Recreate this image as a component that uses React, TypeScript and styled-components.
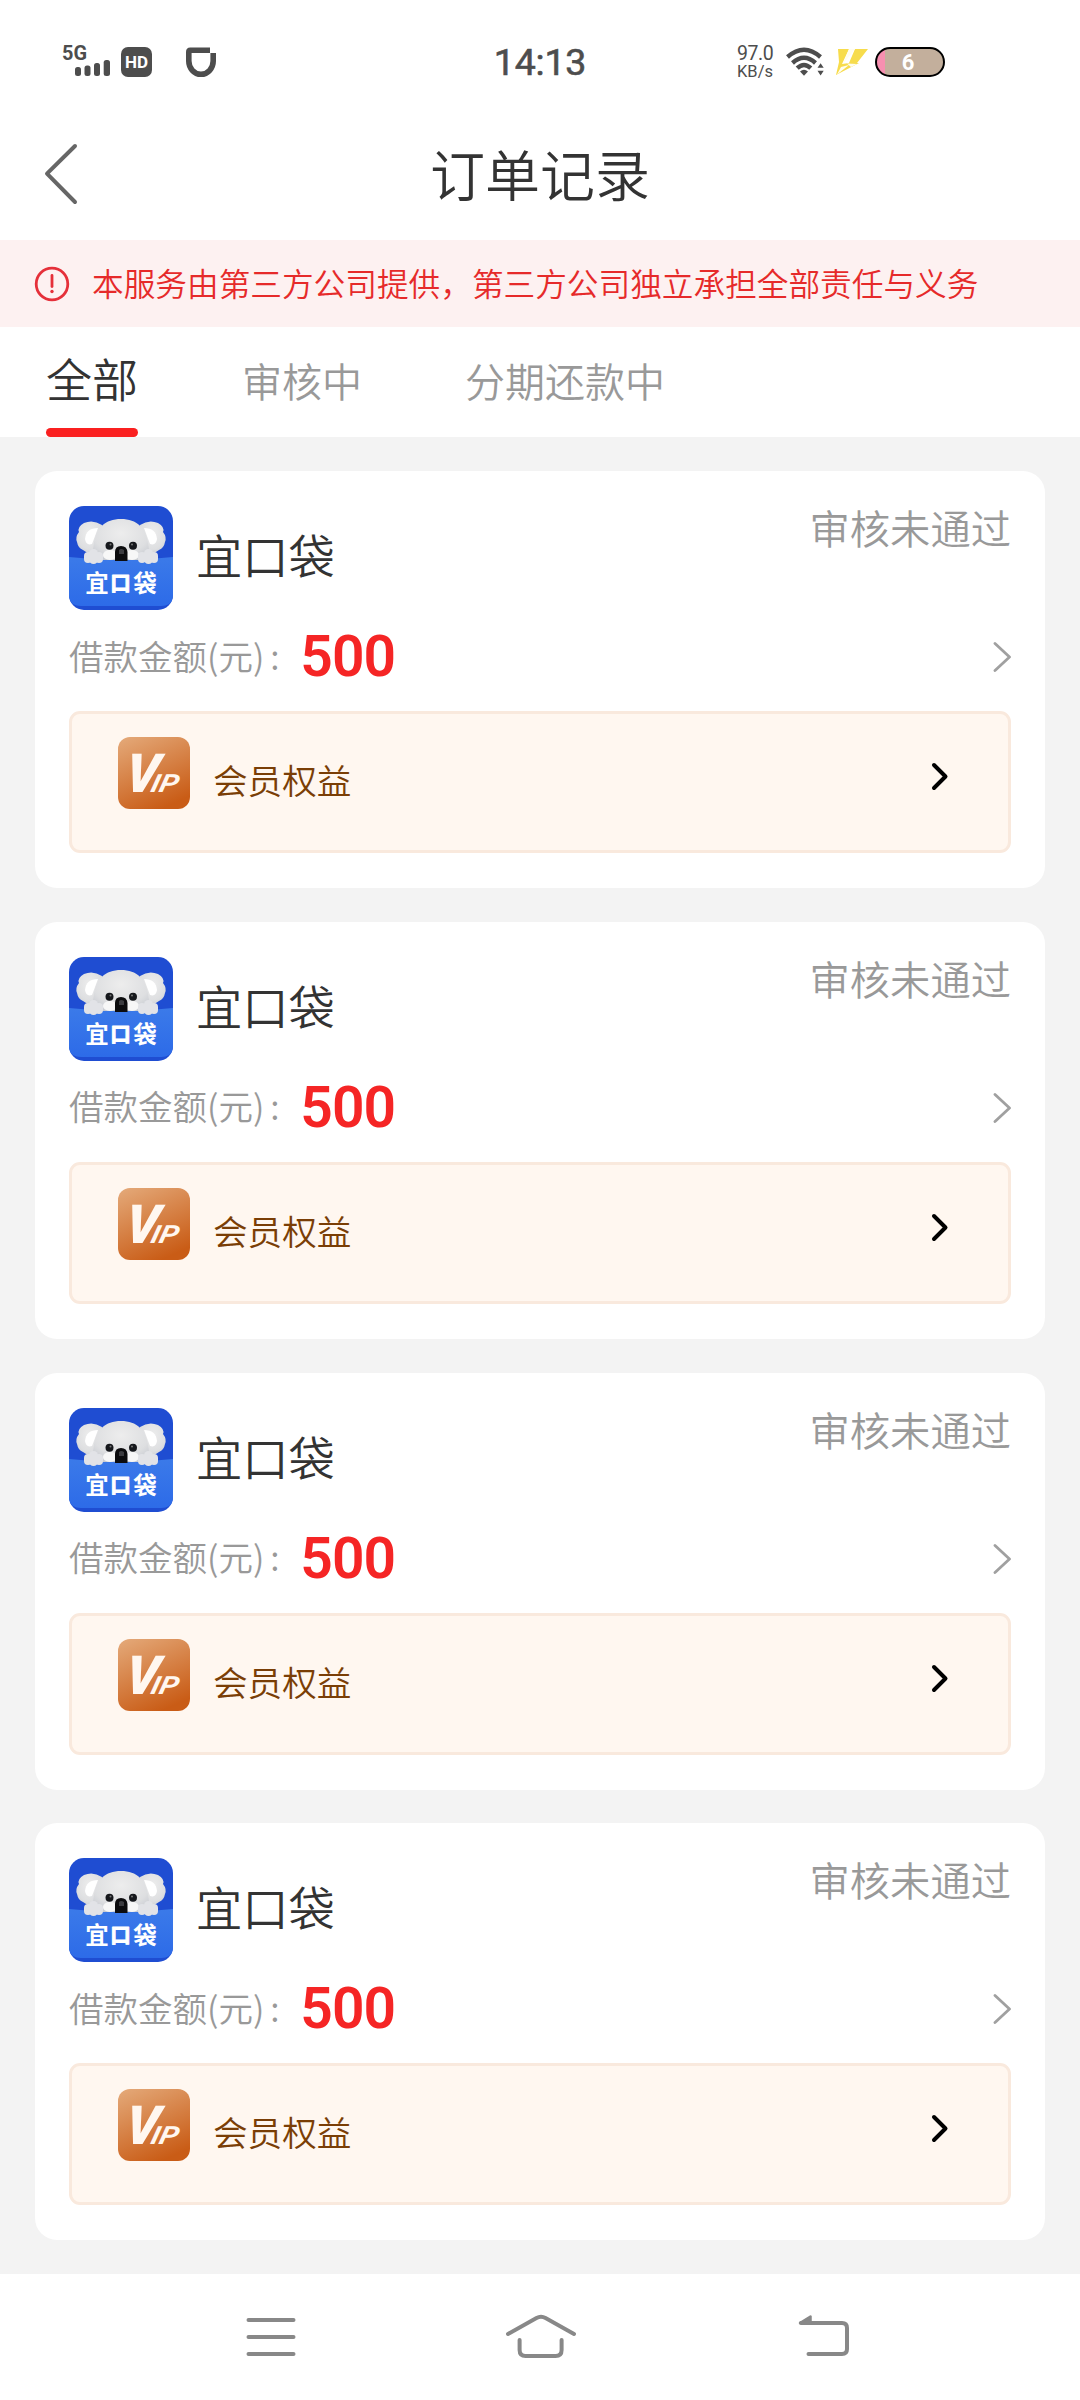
import React from "react";
import styled, { createGlobalStyle } from "styled-components";

interface Order {
  id: number;
  product: string;
  status: string;
  amount: number;
}

interface TabItem {
  label: string;
  isActive: boolean;
}

const orders: Order[] = [
  { id: 1, product: "宜口袋", status: "审核未通过", amount: 500 },
  { id: 2, product: "宜口袋", status: "审核未通过", amount: 500 },
  { id: 3, product: "宜口袋", status: "审核未通过", amount: 500 },
  { id: 4, product: "宜口袋", status: "审核未通过", amount: 500 },
];

const tabs: TabItem[] = [
  { label: "全部", isActive: true },
  { label: "审核中", isActive: false },
  { label: "分期还款中", isActive: false },
];

const SignalIcon = () => (
  <svg width="54" height="44" viewBox="0 -5 54 44">
    <text x="0" y="15" fontFamily="Roboto" fontWeight="700" fontSize="20.5" textLength="25" lengthAdjust="spacingAndGlyphs" fill="#4d4d4d">
      5G
    </text>
    <g fill="#4d4d4d">
      <rect x="13" y="22" width="6" height="9" rx="2.5" />
      <rect x="22.5" y="20.5" width="6" height="10.5" rx="2.5" />
      <rect x="32" y="18" width="6" height="13" rx="2.5" />
      <rect x="41.7" y="15" width="6.3" height="16" rx="2.5" />
    </g>
  </svg>
);

const ShieldIcon = () => (
  <svg width="32" height="32" viewBox="0 0 32 32" fill="none" stroke="#4d4d4d" strokeWidth="5.6">
    <path d="M25 4.3H5.2Q3.8 4.3 3.8 6V15C3.8 22 9 28.3 16 28.3S28.2 22 28.2 15V7" />
  </svg>
);

const WifiIcon = () => (
  <svg width="40" height="30" viewBox="0 0 40 30">
    <g fill="none" stroke="#4d4d4d" strokeWidth="4.4">
      <path d="M1.5 10Q18 -4.5 34.5 10" />
      <path d="M6.5 16Q18 5.6 29.5 16" />
      <path d="M11.2 21.2Q18 14.7 24.8 21.2" />
    </g>
    <path d="M14 24.4Q18 21.2 22 24.4L18 28.7Z" fill="#4d4d4d" />
    <path d="M31.5 20.8L34.6 16.2L37.7 20.8ZM31.5 23.8H37.7L34.6 28.4Z" fill="#4d4d4d" />
  </svg>
);

const BoltIcon = () => (
  <svg width="34" height="28" viewBox="0 0 34 28" fill="#f7dc4c">
    <path d="M3 1H14L7 16L14 15L20 1H33L22 15H24L1 27L4 14Z" />
    <path d="M14 1H20L8 16ZM6 19L14 17L2 26.5ZM12 15.5L22 16L16 19Z" fill="#fffdf0" />
  </svg>
);

const BackIcon = () => (
  <svg width="36" height="64" viewBox="0 0 36 64" fill="none" stroke="#666" strokeWidth="4" strokeLinecap="round" strokeLinejoin="round">
    <path d="M32 4L4 31.7L32 60" />
  </svg>
);

const AlertIcon = () => (
  <svg width="36" height="36" viewBox="0 0 36 36" fill="none" stroke="#e5303a" strokeWidth="2.8">
    <circle cx="18" cy="18" r="15.8" />
    <path d="M18 9.5V20.5" strokeWidth="2.8" strokeLinecap="round" />
    <circle cx="18" cy="25.5" r="1.7" fill="#e5303a" stroke="none" />
  </svg>
);

const RowChevron = () => (
  <svg width="18" height="30" viewBox="0 0 18 30" fill="none" stroke="#a0a0a0" strokeWidth="2.8" strokeLinecap="round" strokeLinejoin="round">
    <path d="M2 1.5L16.5 15L2 28.5" />
  </svg>
);

const BenefitChevron = () => (
  <svg width="18" height="30" viewBox="0 0 18 30" fill="none" stroke="#000" strokeWidth="4" strokeLinecap="round" strokeLinejoin="round">
    <path d="M3 3L14.5 14.5L3 26" />
  </svg>
);

const ProductLogo = ({ id }: { id: number }) => (
  <svg width="104" height="104" viewBox="0 0 104 104">
    <defs>
      <linearGradient id={`pocket${id}`} x1="0" y1="0" x2="0" y2="1">
        <stop offset="0" stopColor="#3b7ae9" />
        <stop offset="1" stopColor="#2d6be8" />
      </linearGradient>
      <radialGradient id={`fur${id}`} cx="0.5" cy="0.35" r="0.7">
        <stop offset="0" stopColor="#ededed" />
        <stop offset="0.7" stopColor="#dedfe1" />
        <stop offset="1" stopColor="#c9ccd2" />
      </radialGradient>
      <clipPath id={`frame${id}`}>
        <rect width="104" height="104" rx="15" />
      </clipPath>
    </defs>
    <g clipPath={`url(#frame${id})`}>
      <rect width="104" height="104" fill="#1f4dd2" />
      <path d="M0 51Q52 57 104 51V92Q102 100 92 100H12Q2 100 0 92Z" fill={`url(#pocket${id})`} />
      <g fill={`url(#fur${id})`}>
        <path d="M33 19Q24 13 15 17Q8 21 10 26Q6 31 8 36Q9 42 14 44Q22 50 32 48Z" />
        <path d="M71 19Q80 13 89 17Q96 21 94 26Q98 31 96 36Q95 42 90 44Q82 50 72 48Z" />
      </g>
      <path d="M29 22Q17 22 16 33Q17 40 23 38Z" fill="#fff" />
      <path d="M75 22Q87 22 88 33Q87 40 81 38Z" fill="#fff" />
      <path d="M29 54Q22 49 25 37C27 22 36 13 52 13S77 22 79 37Q82 49 75 54Z" fill={`url(#fur${id})`} />
      <ellipse cx="41" cy="49" rx="7" ry="5" fill="#f7f7f7" />
      <ellipse cx="63" cy="49" rx="7" ry="5" fill="#f7f7f7" />
      <circle cx="40.5" cy="39.7" r="4" fill="#16181c" />
      <circle cx="64" cy="39.7" r="4" fill="#16181c" />
      <circle cx="41.5" cy="38.6" r="1" fill="#777" />
      <circle cx="63" cy="38.6" r="1" fill="#777" />
      <path d="M46 55V46Q46 40 52 40T58.5 46V55Z" fill="#0c0c0e" />
      <path d="M50 44Q52 42 55 44V48H50Z" fill="#3c3c40" />
      <g fill="#e2e3e7">
        <rect x="15" y="46" width="8" height="11" rx="4" />
        <rect x="20" y="43" width="9" height="15" rx="4.5" />
        <rect x="26" y="46" width="8" height="11" rx="4" />
        <rect x="69" y="46" width="8" height="11" rx="4" />
        <rect x="75" y="43" width="9" height="15" rx="4.5" />
        <rect x="81" y="46" width="8" height="11" rx="4" />
      </g>
      <g fill="#fff" fontFamily="Noto Sans CJK SC, sans-serif" fontWeight="700" fontSize="23.5" textAnchor="middle">
        <text x="28" y="86">宜</text>
        <text x="51.5" y="84.5" fontSize="20.5" stroke="#fff" strokeWidth="1" strokeLinejoin="round">口</text>
        <text x="76" y="86">袋</text>
      </g>
    </g>
  </svg>
);

const VipLogo = ({ id }: { id: number }) => (
  <svg width="72" height="72" viewBox="0 0 72 72">
    <defs>
      <linearGradient id={`vip${id}`} x1="0.15" y1="0" x2="0.6" y2="1">
        <stop offset="0" stopColor="#e3a675" />
        <stop offset="1" stopColor="#c95c16" />
      </linearGradient>
    </defs>
    <rect width="72" height="72" rx="12" fill={`url(#vip${id})`} />
    <g fill="#fff7f0" fontFamily="Roboto" fontStyle="italic">
      <text transform="translate(5.5 55) skewX(-8)" fontSize="54" fontWeight="900" textLength="33" lengthAdjust="spacingAndGlyphs">
        V
      </text>
      <text transform="translate(31.5 55) skewX(-14)" fontSize="25" fontWeight="700" textLength="27" lengthAdjust="spacingAndGlyphs">
        IP
      </text>
    </g>
  </svg>
);

const OrderCard = ({ id, product, status, amount }: Order) => {
  return (
    <Card>
      <CardHead>
        <ProductLogo id={id} />
        <ProductName>{product}</ProductName>
        <OrderStatus>{status}</OrderStatus>
      </CardHead>
      <AmountRow>
        <AmountLabel>借款金额(元)</AmountLabel>
        <Colon>:</Colon>
        <Amount>{amount}</Amount>
        <RowChevron />
      </AmountRow>
      <Benefit>
        <VipLogo id={id} />
        <BenefitText>会员权益</BenefitText>
        <BenefitChevron />
      </Benefit>
    </Card>
  );
};

const App = () => {
  return (
    <>
      <GlobalStyle />
      <Screen>
        <StatusBar>
          <StatusLeft>
            <SignalIcon />
            <HdBadge>HD</HdBadge>
            <ShieldIcon />
          </StatusLeft>
          <Clock>14:13</Clock>
          <StatusRight>
            <NetSpeed>
              <span>97.0</span>
              <small>KB/s</small>
            </NetSpeed>
            <WifiIcon />
            <BoltIcon />
            <Battery>6</Battery>
          </StatusRight>
        </StatusBar>
        <Header>
          <BackIcon />
          <h1>订单记录</h1>
        </Header>
        <Notice>
          <AlertIcon />
          <p>本服务由第三方公司提供，第三方公司独立承担全部责任与义务</p>
        </Notice>
        <Tabs>
          {tabs.map((tab) => (
            <Tab key={tab.label} $active={tab.isActive}>
              {tab.label}
            </Tab>
          ))}
        </Tabs>
        <OrderList>
          {orders.map((order) => (
            <OrderCard key={order.id} {...order} />
          ))}
        </OrderList>
        <SystemNav>
          <svg width="50" height="44" viewBox="0 0 50 44">
            <path d="M2.5 6H47.5M2.5 23H47.5M2.5 40H47.5" />
          </svg>
          <svg width="72" height="44" viewBox="0 0 72 44">
            <path d="M3 20L31.5 4Q36 1.5 40.5 4L69 20" />
            <path d="M14.6 26V36Q14.6 42 20.6 42H50.6Q56.6 42 56.6 36V26" />
          </svg>
          <svg width="53" height="44" viewBox="0 0 53 44">
            <path d="M4 9H45Q50 9 50 14V35Q50 40 45 40H11.5" />
            <path d="M3 9L13.5 2.5V9Z" fill="#888" strokeWidth="2.5" />
          </svg>
        </SystemNav>
      </Screen>
    </>
  );
};

export default App;

const GlobalStyle = createGlobalStyle`
  * {
    box-sizing: border-box;
    margin: 0;
    padding: 0;
  }

  body {
    background-color: #fff;
    font-family: "Noto Sans CJK SC", sans-serif;
    font-weight: 350;
    color: #333;
  }

  svg {
    display: block;
    flex-shrink: 0;
  }
`;

const Screen = styled.div`
  width: 1080px;
  height: 2400px;
  display: flex;
  flex-direction: column;
  overflow: hidden;
  background-color: #f3f3f3;
`;

const StatusBar = styled.div`
  height: 124px;
  display: grid;
  grid-template-columns: 480px 120px 1fr;
  align-items: center;
  background-color: #fff;
  color: #4d4d4d;
  font-family: Roboto, sans-serif;
`;

const StatusLeft = styled.div`
  display: flex;
  align-items: center;
  padding-left: 62px;

  svg:last-child {
    margin-left: 33px;
  }
`;

const HdBadge = styled.div`
  width: 31px;
  height: 30px;
  margin-left: 5px;
  border-radius: 7px;
  background-color: #4d4d4d;
  color: #fff;
  font-size: 17px;
  font-weight: 700;
  line-height: 31px;
  text-align: center;
`;

const Clock = styled.div`
  font-size: 37.5px;
  font-weight: 400;
  line-height: 44px;
  letter-spacing: -0.2px;
  text-align: center;
  -webkit-text-stroke: 0.6px #4d4d4d;
`;

const StatusRight = styled.div`
  display: flex;
  align-items: center;
  padding-left: 137px;

  svg {
    margin-right: 9px;
  }
`;

const NetSpeed = styled.div`
  width: 49px;
  display: flex;
  flex-direction: column;
  padding-top: 1px;
  font-weight: 400;

  span {
    font-size: 19.5px;
    line-height: 18px;
    letter-spacing: -0.4px;
  }

  small {
    font-size: 16.5px;
    line-height: 17px;
  }
`;

const Battery = styled.div`
  width: 70px;
  height: 30px;
  margin-left: -3px;
  border: 2px solid #000;
  border-radius: 15px;
  background: linear-gradient(90deg, #f78fb0 8px, #c3af9c 8px);
  color: #fff;
  font-size: 22px;
  font-weight: 700;
  line-height: 27px;
  padding-right: 4px;
  text-align: center;
`;

const Header = styled.div`
  height: 116px;
  display: flex;
  align-items: center;
  padding: 0 43px 17px;
  background-color: #fff;

  h1 {
    flex: 1;
    padding: 0 36px 4px 0;
    font-size: 55px;
    font-weight: 350;
    line-height: 80px;
    text-align: center;
  }
`;

const Notice = styled.div`
  height: 87px;
  display: flex;
  align-items: center;
  padding-left: 34px;
  background-color: #fdf1f1;

  p {
    margin-left: 22px;
    padding-bottom: 3px;
    color: #e62a2a;
    font-size: 31.67px;
    line-height: 46px;
    white-space: nowrap;
  }
`;

const Tabs = styled.div`
  height: 110px;
  display: flex;
  padding-left: 46px;
  background-color: #fff;
`;

const Tab = styled.div<{ $active: boolean }>`
  height: 110px;
  margin-right: ${({ $active }) => ($active ? "104px" : "103px")};
  color: ${({ $active }) => ($active ? "#333" : "#999")};
  font-size: ${({ $active }) => ($active ? "46px" : "40px")};
  line-height: ${({ $active }) => ($active ? "100px" : "106px")};
  white-space: nowrap;

  &::after {
    content: "";
    display: ${({ $active }) => ($active ? "block" : "none")};
    height: 9px;
    margin-top: 1px;
    border-radius: 4.5px;
    background-color: #fa2020;
  }
`;

const OrderList = styled.div`
  flex: 1;
  display: flex;
  flex-direction: column;
  gap: 33.7px;
  padding: 34px 35px 0;
`;

const Card = styled.div`
  height: 417.1px;
  padding: 35px 34px 0;
  border-radius: 22px;
  background-color: #fff;
`;

const CardHead = styled.div`
  height: 104px;
  display: flex;
  align-items: center;
`;

const ProductName = styled.h2`
  flex: 1;
  margin-left: 23px;
  padding-bottom: 8px;
  font-size: 46.3px;
  font-weight: 350;
  line-height: 60px;
`;

const OrderStatus = styled.div`
  align-self: flex-start;
  height: 50px;
  color: #999;
  font-size: 40.3px;
  line-height: 42px;
`;

const AmountRow = styled.div`
  height: 101px;
  display: flex;
  align-items: center;
  padding-bottom: 7px;

  svg {
    margin-left: auto;
  }
`;

const AmountLabel = styled.span`
  padding-bottom: 5px;
  color: #999;
  font-size: 34.5px;
  line-height: 48px;
`;

const Colon = styled.span`
  width: 36px;
  padding: 0 0 5px 6px;
  color: #999;
  font-size: 34.5px;
  line-height: 48px;
`;

const Amount = styled.span`
  color: #f52525;
  font-family: Roboto, sans-serif;
  font-size: 57px;
  font-weight: 600;
  line-height: 64px;
  letter-spacing: -1px;
`;

const Benefit = styled.div`
  height: 142px;
  display: flex;
  align-items: flex-start;
  padding: 23px 59px 0 46px;
  border: 3px solid #f9e9dd;
  border-radius: 11px;
  background-color: #fff7f0;

  svg:last-child {
    margin: 25px 0 0 auto;
  }
`;

const BenefitText = styled.span`
  margin: 17px 0 0 23px;
  color: #7a3e06;
  font-size: 34.6px;
  line-height: 50px;
`;

const SystemNav = styled.div`
  height: 126px;
  display: flex;
  align-items: center;
  padding: 0 0 2px 246px;
  background-color: #fff;

  svg {
    fill: none;
    stroke: #888;
    stroke-width: 4;
    stroke-linecap: round;
    stroke-linejoin: round;
  }

  svg:nth-child(2) {
    margin: 0 220px 0 209px;
  }
`;
